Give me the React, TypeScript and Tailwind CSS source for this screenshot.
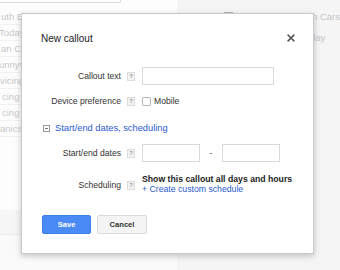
import React from "react";

const font = { fontFamily: '"Liberation Sans", Arial, sans-serif' };

function Help() {
  return (
    <span className="flex h-[9px] w-[8px] shrink-0 items-center justify-center border border-[#dcdcdc] bg-[#f3f3f3] text-[6px] leading-none font-bold text-[#9a9a9a]">
      ?
    </span>
  );
}

function Row({
  label,
  children,
  className,
}: {
  label: string;
  children: React.ReactNode;
  className: string;
}) {
  return (
    <div className={"flex items-center " + className}>
      <div className="w-[99px] shrink-0 text-right text-[8.6px] leading-[10px] text-[#333]">
        {label}
      </div>
      <div className="ml-[6px]">
        <Help />
      </div>
      <div className="ml-[7px] flex items-center">{children}</div>
    </div>
  );
}

export default function App() {
  const leftRows = [
    { t: "uth B", ml: "ml-[1px]" },
    { t: "Today", ml: "-ml-[1px]" },
    { t: "an Ca", ml: "ml-[1px]" },
    { t: "unnyv", ml: "-ml-[1px]" },
    { t: "vicing", ml: "ml-0" },
    { t: "cing", ml: "ml-[2px]" },
    { t: "cing", ml: "ml-[2px]" },
    { t: "anics", ml: "ml-0" },
  ];
  return (
    <div
      className="relative h-[270px] w-[340px] overflow-hidden bg-[#f5f5f5]"
      style={font}
    >
      {/* background page */}
      <div className="flex h-full w-full">
        <div className="flex h-full w-[185px] flex-col bg-[#fdfdfd]">
          <div className="h-[3px] w-[121px] border-r border-b border-[#dedede]" />
          <div className="h-[6px]" />
          {leftRows.map((r, i) => (
            <div
              key={i}
              className="flex h-[16px] items-center overflow-hidden border-b border-[#f1f1f1]"
            >
              <span
                className={
                  "text-[9.5px] leading-none whitespace-nowrap text-[#c8c8c8] " +
                  r.ml
                }
              >
                {r.t}
              </span>
            </div>
          ))}
          <div className="flex-1" />
          <div className="h-[25px] border-b border-[#ececec] bg-[#f6f6f6]" />
          <div className="h-[35px] bg-[#fafafa]" />
        </div>
        <div className="relative flex-1 bg-[#f5f5f5]">
          <div className="absolute top-[12px] left-[47px] h-[9px] w-[9px] border border-[#b5b5b5] bg-white" />
          <div className="pt-[12px] pl-[130px] text-[9.5px] leading-[10px] whitespace-nowrap text-[#c4c4c4]">
            an Cars
          </div>
          <div className="pt-[11px] pl-[128px] text-[9.5px] leading-[10px] whitespace-nowrap text-[#c4c4c4]">
            oday
          </div>
        </div>
      </div>

      {/* dialog */}
      <div className="absolute top-[13px] left-[21px] flex h-[241px] w-[293px] flex-col border border-[#cacaca] bg-white shadow-[0_2px_6px_rgba(0,0,0,0.22)]">
        <div className="flex items-center justify-between pt-[19px] pr-[18px] pl-[19px]">
          <div className="text-[10px] leading-[12px] text-[#222]">New callout</div>
          <svg width="8" height="8" viewBox="0 0 8 8" className="-mt-[3px]">
            <path
              d="M1.2 1.2 L6.8 6.8 M6.8 1.2 L1.2 6.8"
              stroke="#555"
              strokeWidth="1.6"
              strokeLinecap="square"
            />
          </svg>
        </div>

        <Row label="Callout text" className="mt-[22px] h-[18px]">
          <div className="h-[18px] w-[132px] border border-[#d9d9d9] bg-white" />
        </Row>

        <Row label="Device preference" className="mt-[11px] h-[10px]">
          <div className="h-[9px] w-[9px] rounded-[1px] border border-[#b9b9b9] bg-white" />
          <span className="ml-[3px] text-[8.6px] leading-[10px] text-[#333]">
            Mobile
          </span>
        </Row>

        <div className="mt-[16px] ml-[21px] flex h-[12px] items-center">
          <div className="flex h-[7px] w-[7px] items-center justify-center border border-[#9a9a9a]">
            <div className="h-[1px] w-[3px] bg-[#777]" />
          </div>
          <span className="ml-[5px] text-[9.3px] leading-[12px] text-[#2a5bd0]">
            Start/end dates, scheduling
          </span>
        </div>

        <Row label="Start/end dates" className="mt-[10px] h-[18px]">
          <div className="h-[18px] w-[58px] border border-[#d9d9d9] bg-white" />
          <span className="w-[22px] text-center text-[8.6px] leading-[10px] text-[#555]">
            -
          </span>
          <div className="h-[18px] w-[58px] border border-[#d9d9d9] bg-white" />
        </Row>

        <Row label="Scheduling" className="mt-[13px] h-[20px]">
          <div className="-mt-[3px] flex flex-col">
            <span className="text-[8.7px] leading-[10px] font-bold whitespace-nowrap text-[#222]">
              Show this callout all days and hours
            </span>
            <span className="text-[8.7px] leading-[10px] whitespace-nowrap text-[#2a5bd0]">
              + Create custom schedule
            </span>
          </div>
        </Row>

        <div className="mt-[20px] ml-[20px] flex gap-[6px]">
          <div className="flex h-[19px] w-[49px] items-center justify-center rounded-[2px] border border-[#3d7fe8] bg-[#4a8af4] text-[7.6px] font-bold text-white">
            Save
          </div>
          <div className="flex h-[19px] w-[50px] items-center justify-center rounded-[2px] border border-[#dadada] bg-[#f4f4f4] text-[7.6px] font-bold text-[#333]">
            Cancel
          </div>
        </div>
      </div>
    </div>
  );
}
